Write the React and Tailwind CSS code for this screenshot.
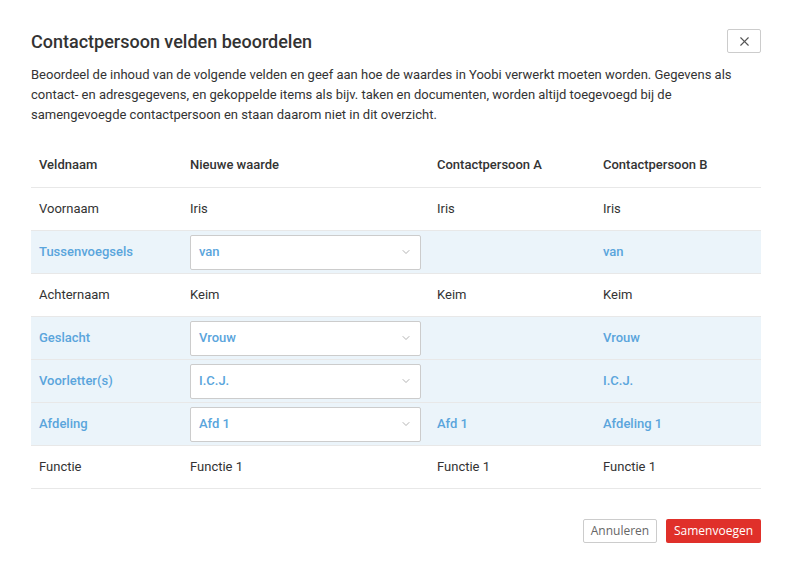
import { X, ChevronDown } from "lucide-react";

const rows = [
  { naam: "Voornaam", nieuw: "Iris", a: "Iris", b: "Iris" },
  { naam: "Tussenvoegsels", nieuw: "van", a: "", b: "van", pick: true },
  { naam: "Achternaam", nieuw: "Keim", a: "Keim", b: "Keim" },
  { naam: "Geslacht", nieuw: "Vrouw", a: "", b: "Vrouw", pick: true },
  { naam: "Voorletter(s)", nieuw: "I.C.J.", a: "", b: "I.C.J.", pick: true },
  { naam: "Afdeling", nieuw: "Afd 1", a: "Afd 1", b: "Afdeling 1", pick: true },
  { naam: "Functie", nieuw: "Functie 1", a: "Functie 1", b: "Functie 1" },
];

const App = () => {
  return (
    <div className="w-[790px] h-[569px] bg-white font-['Roboto',sans-serif] text-[#333] pl-[31px] pr-[29px] pt-[29px]">
      <div className="flex items-start justify-between">
        <h1 className="text-[18px] font-medium leading-[24px] mt-[1px]">
          Contactpersoon velden beoordelen
        </h1>
        <button className="w-[34px] h-[24px] border border-[#ccc] rounded-[2px] flex items-center justify-center text-[#555]">
          <X size={15} strokeWidth={1.8} />
        </button>
      </div>
      <p className="text-[13px] leading-[20px] mt-[11px] text-[#333]">
        Beoordeel de inhoud van de volgende velden en geef aan hoe de waardes in Yoobi verwerkt moeten worden. Gegevens als
        contact- en adresgegevens, en gekoppelde items als bijv. taken en documenten, worden altijd toegevoegd bij de
        samengevoegde contactpersoon en staan daarom niet in dit overzicht.
      </p>
      <div className="mt-[18px] text-[13px]">
        <div className="grid grid-cols-[151px_247px_166px_1fr] h-[45px] items-center border-b border-[#e8e8e8] font-medium">
          <div className="px-2">Veldnaam</div>
          <div className="px-2">Nieuwe waarde</div>
          <div className="px-2">Contactpersoon A</div>
          <div className="px-2">Contactpersoon B</div>
        </div>
        {rows.map((r) => (
          <div
            key={r.naam}
            className={
              r.pick
                ? "grid grid-cols-[151px_247px_166px_1fr] h-[43px] items-center border-b border-[#e8e8e8] bg-[#ebf4fa] text-[#5aa5dc] font-medium"
                : "grid grid-cols-[151px_247px_166px_1fr] h-[43px] items-center border-b border-[#e8e8e8]"
            }
          >
            <div className="px-2">{r.naam}</div>
            <div className="px-2">
              {r.pick ? (
                <div className="h-[35px] bg-white border border-[#ccc] rounded-[2px] flex items-center justify-between pl-2 pr-[8px]">
                  <span>{r.nieuw}</span>
                  <ChevronDown size={12} className="text-[#999]" strokeWidth={1.5} />
                </div>
              ) : (
                r.nieuw
              )}
            </div>
            <div className="px-2">{r.a}</div>
            <div className="px-2">{r.b}</div>
          </div>
        ))}
      </div>
      <div className="flex justify-end gap-[9px] mt-[30px] font-['Open_Sans',sans-serif] text-[12px]">
        <button className="h-[24px] w-[74px] border border-[#ccc] rounded-[2px] text-[#666] bg-white">
          Annuleren
        </button>
        <button className="h-[24px] w-[95px] rounded-[2px] text-white bg-[#e0302a]">
          Samenvoegen
        </button>
      </div>
    </div>
  );
};

export default App;
